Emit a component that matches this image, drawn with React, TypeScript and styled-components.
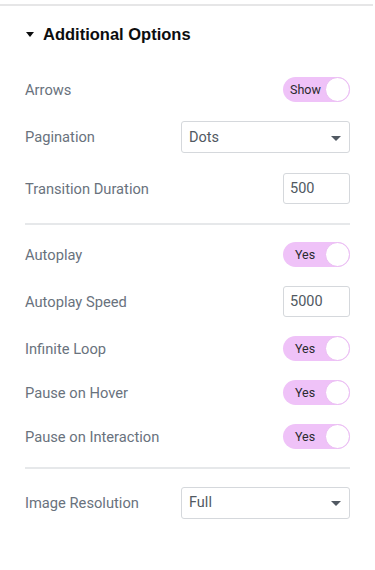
import React from 'react';
import styled, { createGlobalStyle } from 'styled-components';

const GlobalStyle = createGlobalStyle`
  html, body {
    margin: 0;
    padding: 0;
    background: #fff;
  }
  body {
    font-family: Roboto, "Liberation Sans", Arial, sans-serif;
  }
`;

const Panel = styled.div`
  width: 375px;
  min-height: 570px;
  box-sizing: border-box;
  padding-top: 4px;
`;

const TopRule = styled.div`
  width: 373px;
  height: 2px;
  background: #e6e6e7;
`;

const Section = styled.div`
  padding: 0 25px;
`;

const Heading = styled.div`
  display: flex;
  align-items: center;
  gap: 9px;
  height: 56px;
  margin-bottom: 15px;
  padding-left: 1px;
  font-family: "Liberation Sans", Arial, sans-serif;
  font-weight: 700;
  font-size: 16.5px;
  color: #0c0d0e;
`;

const Caret = styled.span`
  width: 0;
  height: 0;
  border-left: 4.5px solid transparent;
  border-right: 4.5px solid transparent;
  border-top: 5px solid #0c0d0e;
`;

const Row = styled.div<{ $h: number; $mb?: number }>`
  display: flex;
  align-items: center;
  justify-content: space-between;
  height: ${p => p.$h}px;
  margin-bottom: ${p => p.$mb ?? 0}px;
`;

const Label = styled.span`
  font-size: 14.7px;
  color: #69727d;
`;

const Toggle = styled.div`
  position: relative;
  width: 67px;
  height: 25px;
  box-sizing: border-box;
  border-radius: 13px;
  background: #efc2f8;
  display: flex;
  align-items: center;
  padding-left: 7px;
  font-size: 12.5px;
  color: #2a2a2e;
`;

const Knob = styled.span`
  position: absolute;
  right: 0;
  top: 0;
  width: 25px;
  height: 25px;
  box-sizing: border-box;
  border-radius: 50%;
  background: #fff;
  border: 1px solid #eabcf3;
`;

const YesText = styled.span`
  margin-left: 5px;
`;

const Select = styled.div`
  width: 169px;
  height: 32px;
  box-sizing: border-box;
  border: 1px solid #d5d8dc;
  border-radius: 3px;
  display: flex;
  align-items: center;
  justify-content: space-between;
  padding: 0 8px 0 7px;
  font-size: 14.5px;
  color: #515962;
`;

const SelectCaret = styled.span`
  width: 0;
  height: 0;
  border-left: 5px solid transparent;
  border-right: 5px solid transparent;
  border-top: 5px solid #515962;
  margin-top: 2px;
`;

const NumberBox = styled.div`
  width: 67px;
  height: 31px;
  box-sizing: border-box;
  border: 1px solid #d5d8dc;
  border-radius: 3px;
  display: flex;
  align-items: center;
  padding-left: 6px;
  font-size: 14.5px;
  color: #515962;
`;

const Divider = styled.div<{ $mt: number; $mb: number }>`
  height: 2px;
  background: #e6e8ea;
  margin: ${p => p.$mt}px 0 ${p => p.$mb}px;
`;

function Switch({ text }: { text: string }) {
  return (
    <Toggle>
      {text === 'Yes' ? <YesText>{text}</YesText> : text}
      <Knob />
    </Toggle>
  );
}

export default function App() {
  return (
    <>
      <GlobalStyle />
      <Panel>
        <TopRule />
        <Section>
          <Heading>
            <Caret />
            Additional Options
          </Heading>
          <Row $h={25} $mb={19}>
            <Label>Arrows</Label>
            <Switch text="Show" />
          </Row>
          <Row $h={32} $mb={20}>
            <Label>Pagination</Label>
            <Select>
              Dots
              <SelectCaret />
            </Select>
          </Row>
          <Row $h={31}>
            <Label>Transition Duration</Label>
            <NumberBox>500</NumberBox>
          </Row>
          <Divider $mt={19} $mb={17} />
          <Row $h={25} $mb={19}>
            <Label>Autoplay</Label>
            <Switch text="Yes" />
          </Row>
          <Row $h={31} $mb={19}>
            <Label>Autoplay Speed</Label>
            <NumberBox>5000</NumberBox>
          </Row>
          <Row $h={25} $mb={19}>
            <Label>Infinite Loop</Label>
            <Switch text="Yes" />
          </Row>
          <Row $h={25} $mb={19}>
            <Label>Pause on Hover</Label>
            <Switch text="Yes" />
          </Row>
          <Row $h={25}>
            <Label>Pause on Interaction</Label>
            <Switch text="Yes" />
          </Row>
          <Divider $mt={18} $mb={17} />
          <Row $h={33}>
            <Label>Image Resolution</Label>
            <Select>
              Full
              <SelectCaret />
            </Select>
          </Row>
        </Section>
      </Panel>
    </>
  );
}
